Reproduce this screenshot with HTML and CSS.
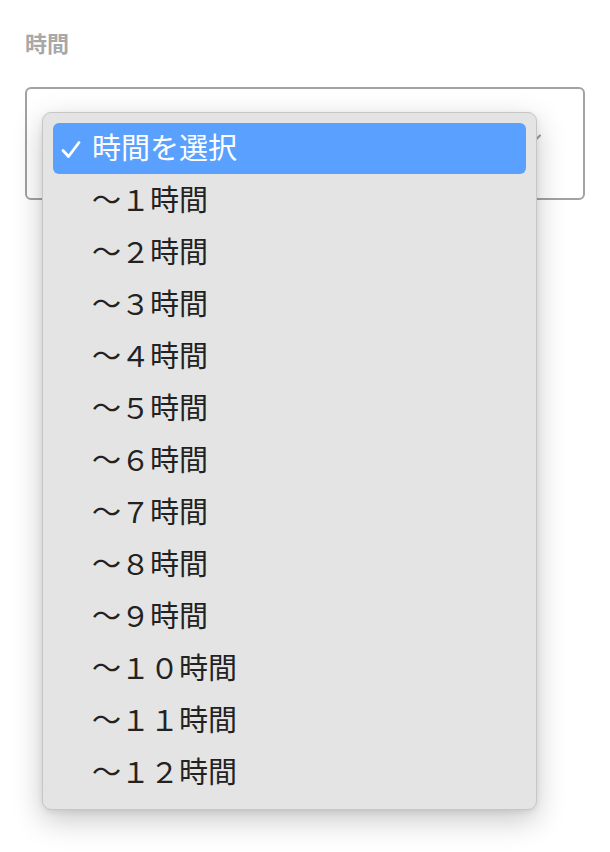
FILE: index.html
```html
<!DOCTYPE html>
<html lang="ja">
<head>
<meta charset="utf-8">
<title>時間</title>
<link rel="stylesheet" href="styles.css">
</head>
<body>
<div class="page">
  <div class="label">時間</div>
  <div class="field">
    <div class="select">
      <svg class="arrow" width="12" height="8" viewBox="0 0 12 8"><path d="M1 1.5 L6 6.5 L11 1.5" fill="none" stroke="#9a9a9a" stroke-width="2" stroke-linecap="round" stroke-linejoin="round"/></svg>
    </div>
    <ul class="menu">
      <li class="item selected"><svg class="check" width="20" height="20" viewBox="0 0 20 20"><path d="M2 10.5 L7.5 16.5 L18 2.5" fill="none" stroke="#ffffff" stroke-width="2.8" stroke-linecap="round" stroke-linejoin="round"/></svg>時間を選択</li>
      <li class="item">〜１時間</li>
      <li class="item">〜２時間</li>
      <li class="item">〜３時間</li>
      <li class="item">〜４時間</li>
      <li class="item">〜５時間</li>
      <li class="item">〜６時間</li>
      <li class="item">〜７時間</li>
      <li class="item">〜８時間</li>
      <li class="item">〜９時間</li>
      <li class="item">〜１０時間</li>
      <li class="item">〜１１時間</li>
      <li class="item">〜１２時間</li>
    </ul>
  </div>
</div>
</body>
</html>
```
FILE: styles.css
```css
html, body {
  margin: 0;
  padding: 0;
  background: #ffffff;
}
body {
  font-family: "Noto Sans CJK JP", "Noto Sans", sans-serif;
}
.page {
  padding: 28px 25px 0 25px;
  min-height: 852px;
  box-sizing: border-box;
}
.label {
  font-size: 22px;
  font-weight: 700;
  line-height: 28px;
  color: #a8a8a8;
}
.field {
  position: relative;
  margin-top: 31px;
}
.select {
  height: 109px;
  border: 2px solid #a2a2a2;
  border-radius: 6px;
  background: #fff;
  position: relative;
}
.arrow {
  position: absolute;
  right: 42px;
  top: 45px;
}
.menu {
  position: absolute;
  left: 17px;
  top: 25px;
  width: 473px;
  margin: 0;
  padding: 10px;
  list-style: none;
  background: #e4e4e4;
  border: 1px solid #c6c6c6;
  border-radius: 9px;
  box-shadow: 0 10px 30px rgba(0, 0, 0, 0.22), 0 2px 6px rgba(0, 0, 0, 0.08);
}
.item {
  position: relative;
  height: 52px;
  box-sizing: border-box;
  padding-bottom: 6px;
  display: flex;
  align-items: center;
  padding-left: 39px;
  font-size: 29px;
  color: #222222;
  border-radius: 6px;
}
.item.selected {
  height: 51px;
  margin-bottom: 1px;
  background: #5aa1ff;
  color: #ffffff;
}
.check {
  position: absolute;
  left: 8px;
  top: 17px;
}
```
